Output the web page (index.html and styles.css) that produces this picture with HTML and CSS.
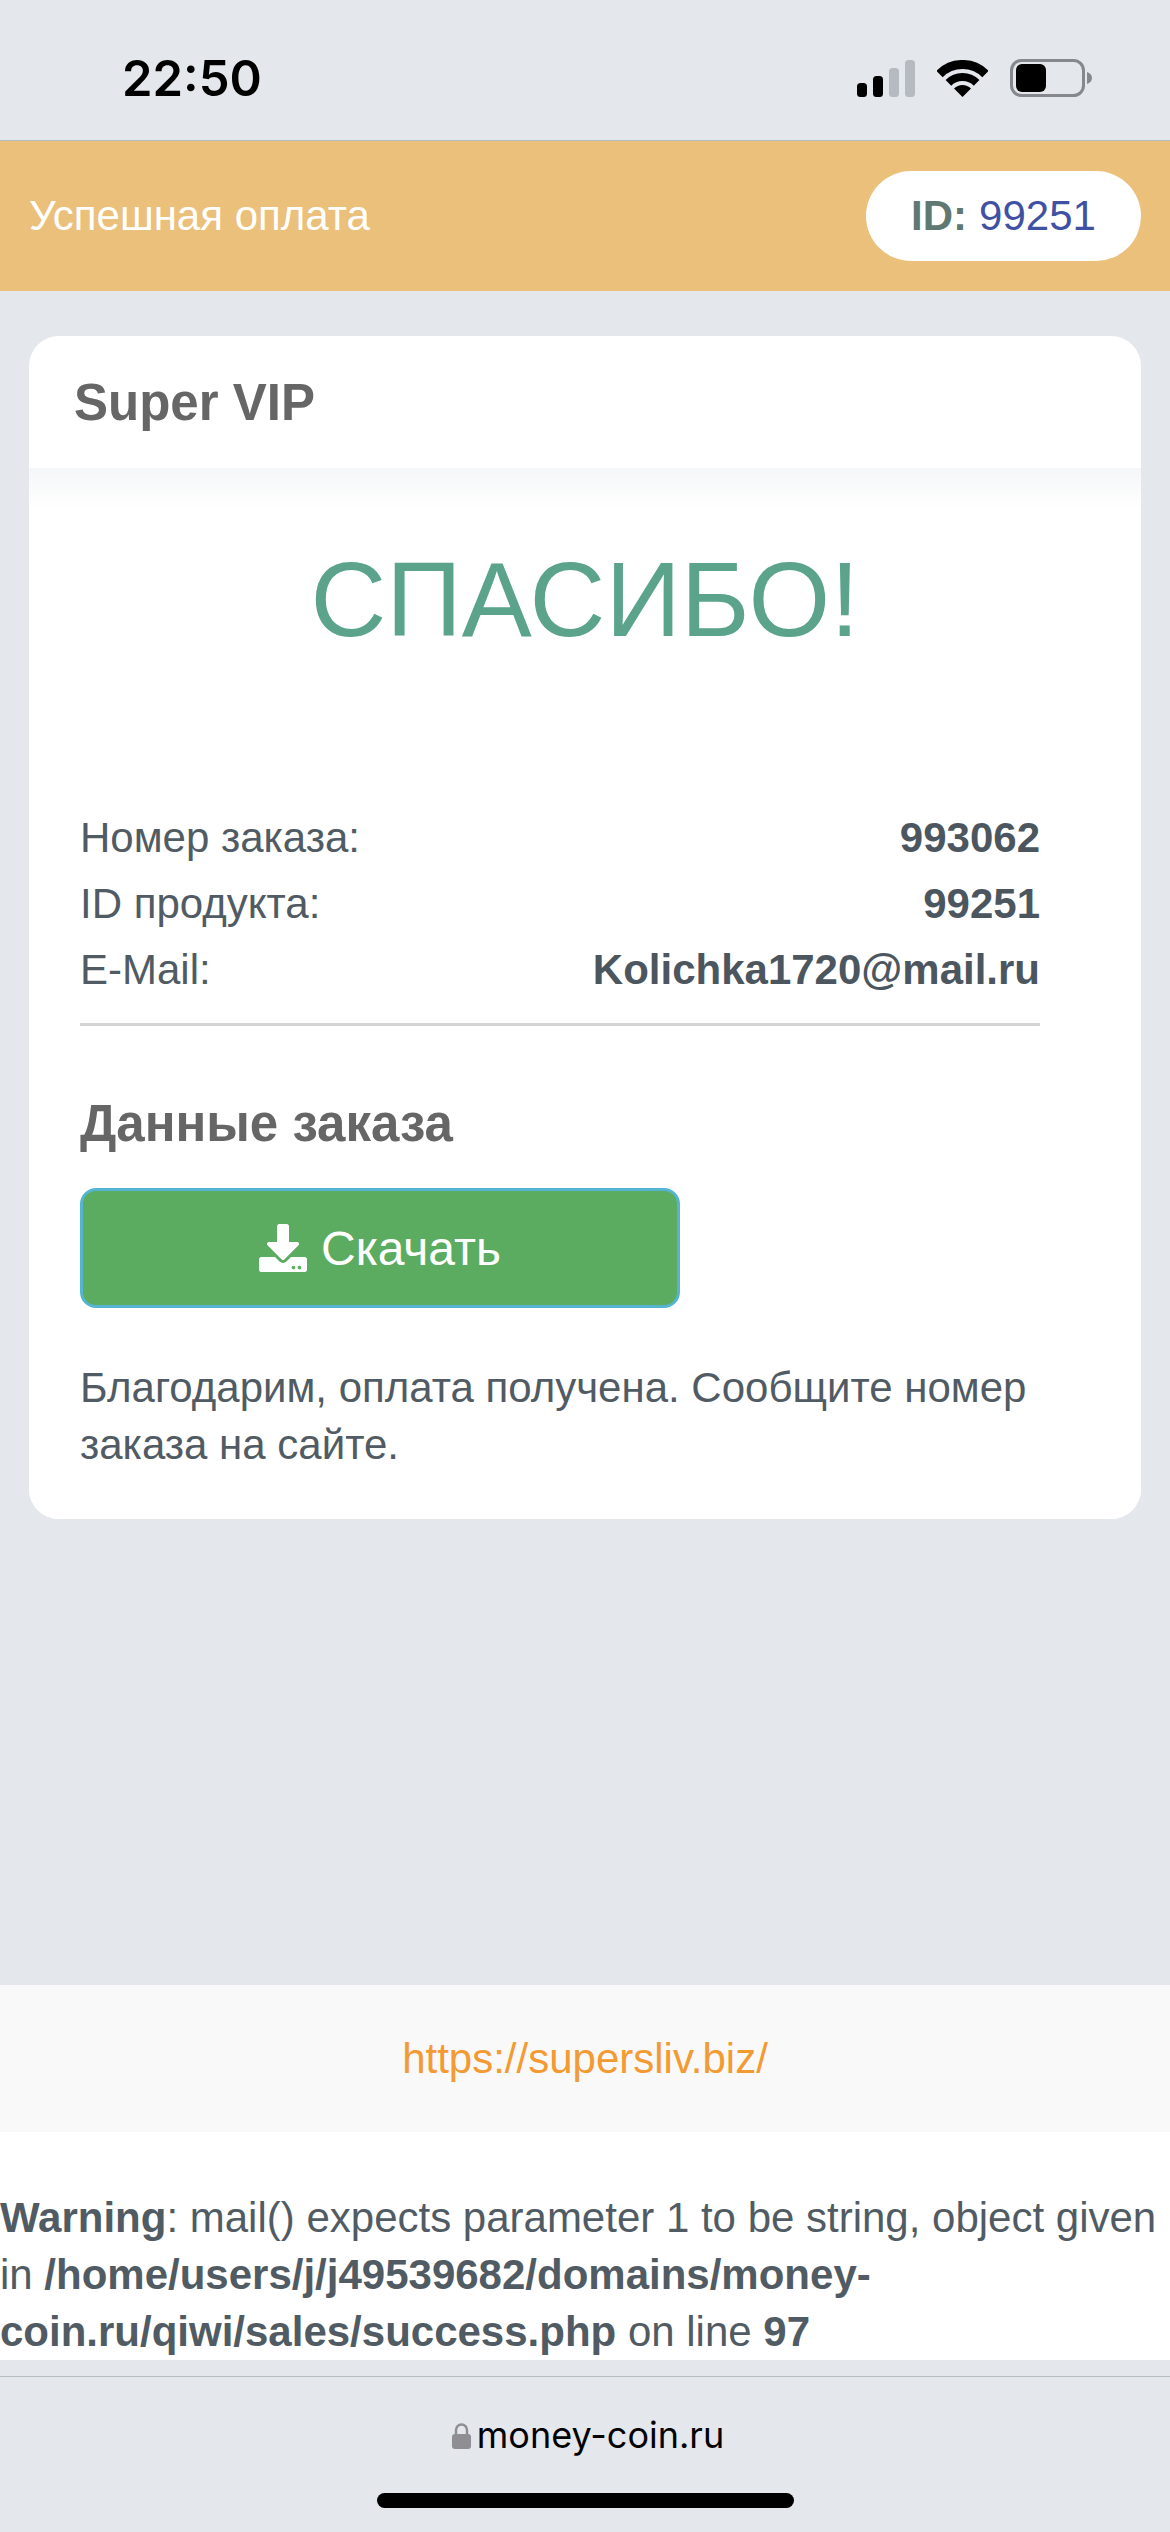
FILE: index.html
```html
<!DOCTYPE html>
<html>

<head>
    <meta charset="utf-8" />
    <title>Успешная оплата</title>
    <link rel="stylesheet" href="styles.css">
</head>

<body>
    <div class="status-bar">
        <span class="status-time">22:50</span>
        <div class="status-icons">
            <svg class="icon-signal" width="58" height="37" viewBox="0 0 58 37">
                <rect x="0" y="23" width="10" height="14" rx="3.500" fill="#000" />
                <rect x="16" y="16" width="10" height="21" rx="3.500" fill="#000" />
                <rect x="32" y="8" width="10" height="29" rx="3.500" fill="#b6bbc1" />
                <rect x="48" y="0" width="10" height="37" rx="3.500" fill="#b6bbc1" />
            </svg>
            <svg class="icon-wifi" width="51" height="37" viewBox="0 0 51 37">
                <path d="M2.500 14A32.500 32.500 0 0 1 48.500 14" fill="none" stroke="#000" stroke-width="9" />
                <path d="M11.400 22.900A20 20 0 0 1 39.600 22.900" fill="none" stroke="#000" stroke-width="8" />
                <path d="M25.500 37L17 28.500A12 12 0 0 1 34 28.500Z" fill="#000" />
            </svg>
            <svg class="icon-battery" width="82" height="38" viewBox="0 0 82 38">
                <rect x="1.500" y="1.500" width="72" height="35" rx="10" fill="none" stroke="#85888c" stroke-width="3" />
                <rect x="6" y="5" width="30" height="28" rx="6" fill="#000" />
                <path d="M77 13c3 1 5 3 5 6s-2 5-5 6z" fill="#85888c" />
            </svg>
        </div>
    </div>

    <div class="top-bar">
        <span class="top-title">Успешная оплата</span>
        <span class="id-pill"><b>ID:</b> <span class="id-num">99251</span></span>
    </div>

    <div class="main">
        <div class="card">
            <div class="card-head">Super VIP</div>
            <div class="card-body">
                <h1 class="thanks">СПАСИБО!</h1>

                <div class="info-row"><span>Номер заказа:</span><b>993062</b></div>
                <div class="info-row"><span>ID продукта:</span><b>99251</b></div>
                <div class="info-row"><span>E-Mail:</span><b>Kolichka1720@mail.ru</b></div>
                <hr class="info-line" />

                <h2 class="order-title">Данные заказа</h2>
                <a class="btn-download" href="#">
                    <svg width="48" height="48" viewBox="0 0 512 512">
                        <path fill="#fff" d="M216 0h80c13.300 0 24 10.700 24 24v168h87.700c17.800 0 26.700 21.500 14.100 34.100L269.700 378.300c-7.500 7.500-19.800 7.500-27.300 0L90.100 226.100c-12.600-12.600-3.700-34.100 14.100-34.100H192V24c0-13.300 10.700-24 24-24zm296 376v112c0 13.300-10.700 24-24 24H24c-13.300 0-24-10.700-24-24V376c0-13.300 10.700-24 24-24h146.700l49 49c20.100 20.100 52.500 20.100 72.600 0l49-49H488c13.300 0 24 10.700 24 24zm-124 88c0-11-9-20-20-20s-20 9-20 20 9 20 20 20 20-9 20-20zm64 0c0-11-9-20-20-20s-20 9-20 20 9 20 20 20 20-9 20-20z" />
                    </svg>
                    Скачать
                </a>
                <p class="note">Благодарим, оплата получена. Сообщите номер заказа на сайте.</p>
            </div>
        </div>
    </div>

    <div class="site-footer"><a href="#">https://supersliv.biz/</a></div>

    <div class="php-warning">
        <b>Warning</b>: mail() expects parameter 1 to be string, object given in <b>/home/users/j/j49539682/domains/money-coin.ru/qiwi/sales/success.php</b> on line <b>97</b>
    </div>

    <div class="url-bar">
        <div class="url-text">
            <svg width="19" height="27" viewBox="0 0 19 27">
                <path d="M4 13V8a5.500 5.500 0 0 1 11 0v5" fill="none" stroke="#8e8e93" stroke-width="2.500" />
                <rect x="0" y="12" width="19" height="15" rx="3" fill="#8e8e93" />
            </svg>
            <span>money-coin.ru</span>
        </div>
        <div class="home-bar"></div>
    </div>
</body>

</html>
```

FILE: styles.css
```css
html {
    margin: 0px;
    padding: 0px;
}

body {
    font-family: 'Liberation Sans', Arial, sans-serif;
    margin: 0px;
    padding: 0px;
    width: 1170px;
    height: 2532px;
    overflow: hidden;
    display: flex;
    flex-direction: column;
    color: #515b63;
    background-color: #e4e7ec;
}

.status-bar {
    height: 141px;
    flex: none;
    display: flex;
    align-items: center;
    justify-content: space-between;
    padding: 16px 78px 0px 122px;
    box-sizing: border-box;
    border-bottom: 1px solid #b4bcc4;
}

.status-time {
    font-family: 'Inter', sans-serif;
    font-size: 49px;
    font-weight: 600;
    color: #000;
}

.status-icons {
    display: flex;
    align-items: center;
    gap: 22px;
}

.top-bar {
    height: 150px;
    flex: none;
    background-color: #ebc07b;
    display: flex;
    align-items: center;
    justify-content: space-between;
    padding: 0px 29px;
    box-sizing: border-box;
}

.top-title {
    color: #fff;
    font-size: 42px;
}

.id-pill {
    width: 275px;
    height: 90px;
    border-radius: 45px;
    background-color: #fff;
    display: flex;
    align-items: center;
    justify-content: center;
    gap: 12px;
    font-size: 42px;
}

.id-pill b {
    color: #5f7872;
}

.id-num {
    color: #3f51a3;
}

.main {
    flex: 1;
    padding: 45px 29px 0px;
}

.card {
    background-color: #fff;
    border-radius: 30px;
    overflow: hidden;
}

.card-head {
    height: 132px;
    box-sizing: border-box;
    padding: 0px 45px;
    display: flex;
    align-items: center;
    font-size: 51px;
    font-weight: bold;
    color: #666;
}

.card-body {
    padding: 0px 101px 46px 51px;
    background: linear-gradient(#f5f6f8, #fff 42px);
}

.thanks {
    margin: 0px -50px 0px 0px;
    padding-top: 77px;
    height: 337px;
    box-sizing: border-box;
    font-size: 105px;
    font-weight: normal;
    line-height: 110px;
    text-align: center;
    color: #5ba38a;
}

.info-row {
    display: flex;
    justify-content: space-between;
    height: 66px;
    line-height: 66px;
    font-size: 42px;
}

.info-row b {
    color: #4c565f;
}

.info-line {
    margin: 20px 0px 0px;
    border: 0px;
    height: 3px;
    background-color: #d5d5d5;
}

.order-title {
    margin: 0px;
    padding-top: 67px;
    font-size: 51px;
    line-height: 62px;
    color: #666;
}

.btn-download {
    margin-top: 33px;
    width: 600px;
    height: 120px;
    box-sizing: border-box;
    display: flex;
    align-items: center;
    justify-content: center;
    gap: 14px;
    background-color: #5bab60;
    border: 3px solid #55b5d0;
    border-radius: 16px;
    color: #fff;
    font-size: 48px;
    text-decoration: none;
}

.note {
    margin: 51px 0px 0px;
    font-size: 42px;
    line-height: 57px;
}

.site-footer {
    height: 147px;
    flex: none;
    background-color: #f9f9f9;
    display: flex;
    align-items: center;
    justify-content: center;
    font-size: 42px;
}

.site-footer a {
    color: #f39a33;
    text-decoration: none;
}

.php-warning {
    height: 228px;
    flex: none;
    box-sizing: border-box;
    padding-top: 57px;
    background-color: #fff;
    font-size: 42px;
    line-height: 57px;
}

.url-bar {
    height: 156px;
    flex: none;
    box-sizing: border-box;
    margin-top: 16px;
    border-top: 1px solid #b4bcc4;
    display: flex;
    flex-direction: column;
    align-items: center;
}

.url-text {
    margin-top: 36px;
    margin-left: 6px;
    display: flex;
    align-items: center;
    gap: 6px;
    font-family: 'Inter', sans-serif;
    font-size: 36px;
    color: #000;
}

.home-bar {
    margin-top: 36px;
    width: 417px;
    height: 15px;
    border-radius: 8px;
    background-color: #000;
}
```
